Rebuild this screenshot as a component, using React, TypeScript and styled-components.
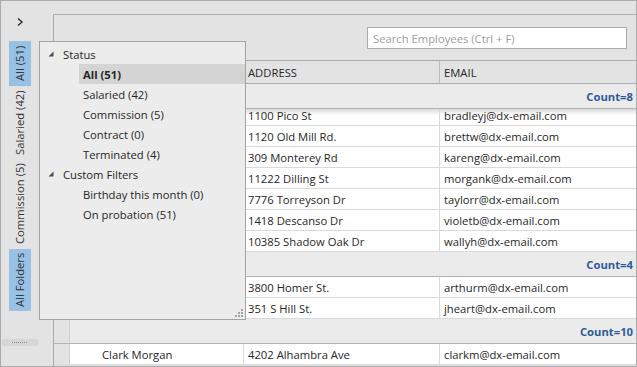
import React from "react";
import styled, { createGlobalStyle, css } from "styled-components";

const GlobalStyle = createGlobalStyle`
	html, body {
		margin: 0;
		padding: 0;
	}
	body {
		font-family: "Open Sans", "Segoe UI", sans-serif;
		font-size: 11.25px;
		color: #262626;
	}
`;

//Window frame
const Window = styled.div`
	position: relative;
	display: flex;
	width: 637px;
	height: 367px;
	box-sizing: border-box;
	border: 1px solid #ababab;
	background: #e3e3e3;
	overflow: hidden;
`;

//Left navigation strip
const Sidebar = styled.div`
	display: flex;
	flex-direction: column;
	width: 52px;
	flex: none;
`;

const Collapse = styled.div`
	display: flex;
	width: 8px;
	height: 10px;
	margin: 16px 0 14px 15px;
`;

const TabStrip = styled.div`
	display: flex;
	flex-direction: column;
	width: 22px;
	margin-left: 8px;
`;

const Tab = styled.div<{ $len: number; $active?: boolean; $gap?: number }>`
	display: flex;
	align-items: center;
	justify-content: center;
	height: ${(p) => p.$len}px;
	margin-top: ${(p) => p.$gap ?? 0}px;
	background: ${(p) => (p.$active ? "#97c1e5" : "transparent")};
	writing-mode: vertical-rl;
	transform: rotate(180deg);
	white-space: nowrap;
	color: #333;
	line-height: 22px;
`;

const Grip = styled.div`
	display: flex;
	align-items: center;
	justify-content: center;
	width: 36px;
	height: 7px;
	margin: auto 0 20px 1px;
	background: #d6d6d6;

	&::before {
		content: "";
		width: 16px;
		height: 1px;
		background: repeating-linear-gradient(90deg, #8c8c8c 0 1px, transparent 1px 2px);
	}
`;

//Grid panel
const Panel = styled.div`
	display: flex;
	flex-direction: column;
	flex: 1;
	min-width: 0;
	margin-top: 13px;
	border-left: 1px solid #ababab;
	border-top: 1px solid #ababab;
	overflow: hidden;
`;

const Toolbar = styled.div`
	display: flex;
	justify-content: flex-end;
	align-items: flex-start;
	flex: none;
	height: 46px;
	box-sizing: border-box;
	padding: 12px 9px 0 0;
	border-bottom: 1px solid #ababab;
`;

const Search = styled.div`
	display: flex;
	align-items: center;
	width: 260px;
	height: 22px;
	box-sizing: border-box;
	padding-left: 5px;
	border: 1px solid #ababab;
	background: #ffffff;
	color: #9c9c9c;
`;

const columns = "16px 174px 196px 1fr";

const HeaderRow = styled.div`
	display: grid;
	grid-template-columns: ${columns};
	flex: none;
	height: 23px;
	box-sizing: border-box;
	border-bottom: 1px solid #ababab;
`;

const HeaderCell = styled.div`
	display: flex;
	align-items: center;
	padding-left: 4px;
	border-right: 1px solid #bdbdbd;
	text-transform: uppercase;

	&:last-child {
		border-right: none;
	}
`;

const Body = styled.div`
	flex: 1;
	overflow: hidden;
`;

const GroupRow = styled.div`
	display: grid;
	grid-template-columns: ${columns};
	height: 25px;
	box-sizing: border-box;
	border-bottom: 1px solid #b3b3b3;
`;

const Indent = styled.div`
	background: #e3e3e3;
	border-right: 1px solid #cfcfcf;
`;

const GroupSummary = styled.div`
	grid-column: 2 / 5;
	display: flex;
	align-items: center;
	justify-content: flex-end;
	padding-right: 3px;
	background: #ebebeb;
	color: #2e5a9c;
	font-weight: 700;
`;

const Row = styled.div<{ $clip?: boolean }>`
	display: grid;
	grid-template-columns: ${columns};
	height: 21px;
	box-sizing: border-box;
	border-bottom: 1px solid #dadada;
	background: #ffffff;
	overflow: hidden;

	${(p) =>
		p.$clip &&
		css`
			height: 17px;
			background: linear-gradient(to bottom, #d9d9d9, #ffffff 6px);
			& > * {
				margin-top: -4px;
			}
		`}
`;

const Cell = styled.div<{ $pad?: number }>`
	display: flex;
	align-items: center;
	height: 20px;
	padding-left: ${(p) => p.$pad ?? 4}px;
	border-right: 1px solid #dadada;
	white-space: nowrap;

	&:last-child {
		border-right: none;
	}
`;

const RowIndent = styled(Indent)`
	height: 20px;
`;

//Filter popup
const Popup = styled.div`
	position: absolute;
	left: 38px;
	top: 40px;
	width: 207px;
	height: 279px;
	box-sizing: border-box;
	padding-top: 2px;
	border: 1px solid #a3a3a3;
	background: #ececec;
`;

const Node = styled.div`
	display: flex;
	align-items: center;
	height: 20px;
	padding-left: 8px;
	gap: 9px;
`;

const Item = styled.div<{ $active?: boolean }>`
	display: flex;
	align-items: center;
	height: 20px;
	margin-left: 39px;
	padding-left: 4px;
	background: ${(p) => (p.$active ? "#d4d4d4" : "transparent")};
	font-weight: ${(p) => (p.$active ? 700 : 400)};
`;

const Resize = styled.svg`
	position: absolute;
	right: 1px;
	bottom: 1px;
`;

const Expander = () => (
	<svg width="6" height="6" viewBox="0 0 6 6">
		<polygon points="5.5,0.5 5.5,5.5 0.5,5.5" fill="#4a4a4a" />
	</svg>
);

//name is left out where the popup covers the row
type Employee = { name?: string; address: string; email: string };

const groups: { count: number; rows: Employee[] }[] = [
	{
		count: 8,
		rows: [
			{ address: "1100 Pico St", email: "bradleyj@dx-email.com" },
			{ address: "1120 Old Mill Rd.", email: "brettw@dx-email.com" },
			{ address: "309 Monterey Rd", email: "kareng@dx-email.com" },
			{ address: "11222 Dilling St", email: "morgank@dx-email.com" },
			{ address: "7776 Torreyson Dr", email: "taylorr@dx-email.com" },
			{ address: "1418 Descanso Dr", email: "violetb@dx-email.com" },
			{ address: "10385 Shadow Oak Dr", email: "wallyh@dx-email.com" },
		],
	},
	{
		count: 4,
		rows: [
			{ address: "3800 Homer St.", email: "arthurm@dx-email.com" },
			{ address: "351 S Hill St.", email: "jheart@dx-email.com" },
		],
	},
	{
		count: 10,
		rows: [{ name: "Clark Morgan", address: "4202 Alhambra Ave", email: "clarkm@dx-email.com" }],
	},
];

const statusItems = ["All (51)", "Salaried (42)", "Commission (5)", "Contract (0)", "Terminated (4)"];
const customItems = ["Birthday this month (0)", "On probation (51)"];

export function App() {
	return (
		<>
			<GlobalStyle />
			<Window>
				<Sidebar>
					<Collapse>
						<svg width="8" height="10" viewBox="0 0 8 10">
							<polyline points="2,1.5 6,5 2,8.5" fill="none" stroke="#333" strokeWidth="1.5" />
						</svg>
					</Collapse>
					<TabStrip>
						<Tab $len={45} $active>All (51)</Tab>
						<Tab $len={74}>Salaried (42)</Tab>
						<Tab $len={87}>Commission (5)</Tab>
						<Tab $len={62} $gap={2} $active>All Folders</Tab>
					</TabStrip>
					<Grip />
				</Sidebar>

				<Panel>
					<Toolbar>
						<Search>Search Employees (Ctrl + F)</Search>
					</Toolbar>
					<HeaderRow>
						<HeaderCell />
						<HeaderCell />
						<HeaderCell>Address</HeaderCell>
						<HeaderCell>Email</HeaderCell>
					</HeaderRow>
					<Body>
						{groups.map((g, gi) => (
							<React.Fragment key={gi}>
								<GroupRow>
									<Indent />
									<GroupSummary>Count={g.count}</GroupSummary>
								</GroupRow>
								{g.rows.map((r, ri) => (
									<Row key={r.email} $clip={gi === 0 && ri === 0}>
										<RowIndent />
										<Cell $pad={32}>{r.name}</Cell>
										<Cell>{r.address}</Cell>
										<Cell>{r.email}</Cell>
									</Row>
								))}
							</React.Fragment>
						))}
					</Body>
				</Panel>

				<Popup>
					<Node>
						<Expander />
						Status
					</Node>
					{statusItems.map((s, i) => (
						<Item key={s} $active={i === 0}>
							{s}
						</Item>
					))}
					<Node>
						<Expander />
						Custom Filters
					</Node>
					{customItems.map((s) => (
						<Item key={s}>{s}</Item>
					))}
					<Resize width="9" height="9" viewBox="0 0 9 9">
						<g fill="#a6a6a6">
							<rect x="6" y="0" width="2" height="2" />
							<rect x="3" y="3" width="2" height="2" />
							<rect x="6" y="3" width="2" height="2" />
							<rect x="0" y="6" width="2" height="2" />
							<rect x="3" y="6" width="2" height="2" />
							<rect x="6" y="6" width="2" height="2" />
						</g>
					</Resize>
				</Popup>
			</Window>
		</>
	);
}

export default App;
